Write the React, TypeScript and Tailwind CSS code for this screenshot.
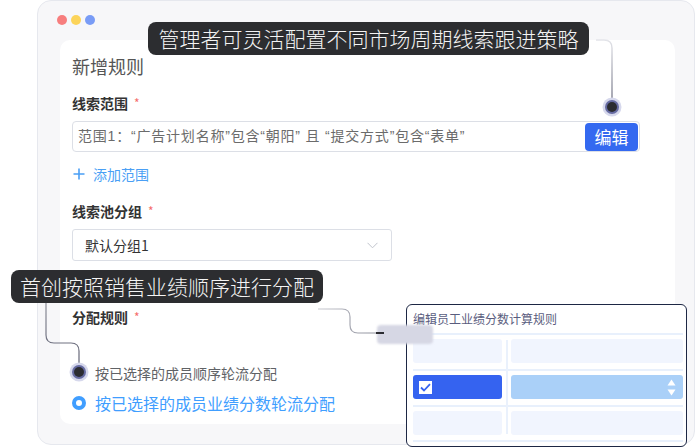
import React from "react";

const Star = () => <span className="ml-[6px] text-[#f56c6c] text-[12px] font-normal">*</span>;

export default function App() {
  return (
    <div className="relative w-[697px] h-[448px] bg-white overflow-hidden font-['Noto_Sans_CJK_SC','Noto_Sans',sans-serif]">
      {/* window */}
      <div className="ml-[37px] w-[658px] h-[445px] rounded-[14px] border border-[#e6e8ee] bg-[#f7f7f9] flex flex-col">
        <div className="flex items-center gap-[4px] pl-[19px] pt-[14px]">
          <div className="w-[10px] h-[10px] rounded-full bg-[#f77e7e]" />
          <div className="w-[10px] h-[10px] rounded-full bg-[#fcd45a]" />
          <div className="w-[10px] h-[10px] rounded-full bg-[#799cf6]" />
        </div>
        <div className="mt-[15px] ml-[22px] w-[615px] h-[384px] rounded-[10px] bg-white pl-[12px] pt-[13px] flex flex-col items-start">
          <div className="text-[18px] leading-[26px] text-[#555555]">新增规则</div>
          <div className="mt-[14px] text-[14px] leading-[20px] font-semibold text-[#333333] flex items-center">线索范围<Star /></div>
          <div className="mt-[8px] w-[568px] h-[31px] rounded-[4px] border border-[#dcdfe6] flex items-center justify-between pl-[5px] pr-[1px]">
            <span className="text-[14px] text-[#6b6b6b] whitespace-nowrap tracking-[0.8px] font-['Liberation_Sans','Noto_Sans_CJK_SC',sans-serif]">范围1：“广告计划名称”包含“朝阳” 且 “提交方式”包含“表单”</span>
            <div className="w-[53px] h-[28px] rounded-[4px] bg-[#3469f0] text-white text-[17px] flex items-center justify-center">编辑</div>
          </div>
          <div className="mt-[12px] h-[20px] flex items-center text-[14px] text-[#4a9ff5] pl-[1px]">
            <svg width="12" height="12" viewBox="0 0 12 12" className="mr-[8px]">
              <path d="M6 0.5V11.5M0.5 6H11.5" stroke="#4a9ff5" strokeWidth="1.6" />
            </svg>
            添加范围
          </div>
          <div className="mt-[17px] text-[14px] leading-[20px] font-semibold text-[#333333] flex items-center">线索池分组<Star /></div>
          <div className="mt-[8px] w-[320px] h-[32px] rounded-[3px] border border-[#dcdfe6] flex items-center justify-between pl-[12px] pr-[13px]">
            <span className="text-[14px] text-[#333333]">默认分组1</span>
            <svg width="11" height="7" viewBox="0 0 11 7">
              <path d="M0.5 0.8L5.5 5.8L10.5 0.8" fill="none" stroke="#c0c4cc" strokeWidth="1" />
            </svg>
          </div>
          <div className="mt-[46px] text-[14px] leading-[20px] font-semibold text-[#333333] flex items-center">分配规则<Star /></div>
          <div className="mt-[36px] h-[20px] flex items-center pl-[23px] text-[14px] text-[#606266]">按已选择的成员顺序轮流分配</div>
          <div className="mt-[8px] h-[24px] flex items-center text-[16px] text-[#409eff]">
            <div className="w-[14px] h-[14px] rounded-full border-[4px] border-[#409eff] bg-white mr-[9px]" />
            按已选择的成员业绩分数轮流分配
          </div>
        </div>
      </div>

      {/* connectors */}
      <svg className="absolute inset-0 pointer-events-none" width="697" height="448" viewBox="0 0 697 448">
        <defs>
          <linearGradient id="g1" x1="0" y1="0" x2="0" y2="1">
            <stop offset="0" stopColor="#e4e5ea" />
            <stop offset="1" stopColor="#6c6e80" />
          </linearGradient>
          <linearGradient id="g2" x1="0" y1="0" x2="0" y2="1">
            <stop offset="0" stopColor="#8d8f9a" />
            <stop offset="1" stopColor="#5c5e70" />
          </linearGradient>
          <linearGradient id="g3" x1="0" y1="0" x2="1" y2="0">
            <stop offset="0" stopColor="#c9cad1" />
            <stop offset="1" stopColor="#8a8c98" />
          </linearGradient>
        </defs>
        <path d="M596 40 H604 Q612 40 612 48 V104" fill="none" stroke="url(#g1)" strokeWidth="1.3" />
        <path d="M46 302 V335 Q46 343 54 343 H71 Q79 343 79 351 V370" fill="none" stroke="url(#g2)" strokeWidth="1.2" />
        <path d="M318 309 H342 Q350 309 350 317 V325 Q350 333 358 333 H378" fill="none" stroke="url(#g3)" strokeWidth="1.2" />
        <circle cx="612" cy="107" r="9.5" fill="#d6d8ec" />
        <circle cx="612" cy="107" r="7" fill="#666ba2" />
        <circle cx="612" cy="107" r="5" fill="#2b2c31" />
        <circle cx="79" cy="372" r="9.5" fill="#d6d8ec" />
        <circle cx="79" cy="372" r="7" fill="#666ba2" />
        <circle cx="79" cy="372" r="5" fill="#2b2c31" />
      </svg>

      {/* tooltips */}
      <div className="absolute left-[148px] top-[22px] w-[441px] h-[33px] rounded-[8px] bg-[#2c2d30] text-[#f4f4f4] text-[21px] leading-[33px] font-light text-center whitespace-nowrap">
        管理者可灵活配置不同市场周期线索跟进策略
      </div>
      <div className="absolute left-[11px] top-[270px] w-[312px] h-[33px] rounded-[8px] bg-[#2c2d30] text-[#f4f4f4] text-[21px] leading-[33px] font-light text-center whitespace-nowrap">
        首创按照销售业绩顺序进行分配
      </div>

      {/* floating panel */}
      <div className="absolute left-[406px] top-[304px] w-[281px] h-[143px] rounded-[6px] border border-[#1d2744] bg-white pl-[6px] pr-[3px] flex flex-col">
        <div className="h-[28px] flex items-center text-[12px] text-[#5a5d7e] whitespace-nowrap">编辑员工业绩分数计算规则</div>
        <div className="relative flex flex-col">
          <div className="absolute left-[93px] top-[7px] w-[2px] h-[94px] bg-[#eaf1fc]" />
          <div className="h-[2px] bg-[#e8f0fc]" />
          <div className="mt-[4px] flex gap-[9px]">
            <div className="w-[89px] h-[24px] rounded-[3px] bg-[#f1f5fe]" />
            <div className="w-[172px] h-[24px] rounded-[3px] bg-[#f1f5fe]" />
          </div>
          <div className="mt-[6px] h-[2px] bg-[#e8f0fc]" />
          <div className="mt-[4px] flex gap-[9px]">
            <div className="w-[89px] h-[24px] rounded-[3px] bg-[#3563f0] flex items-center pl-[6px]">
              <div className="w-[13px] h-[13px] bg-white flex items-center justify-center">
                <svg width="11" height="9" viewBox="0 0 11 9">
                  <path d="M1 4.5L4 7.5L10 1.2" fill="none" stroke="#3563f0" strokeWidth="1.8" />
                </svg>
              </div>
            </div>
            <div className="w-[172px] h-[24px] rounded-[3px] bg-[#aad0f8] flex items-center justify-end pr-[7px]">
              <svg width="9" height="17" viewBox="0 0 9 17">
                <path d="M4.5 0.5L8.5 6.5H0.5Z" fill="white" />
                <path d="M4.5 16.5L8.5 10.5H0.5Z" fill="white" />
              </svg>
            </div>
          </div>
          <div className="mt-[6px] h-[2px] bg-[#e8f0fc]" />
          <div className="mt-[4px] flex gap-[9px]">
            <div className="w-[89px] h-[24px] rounded-[3px] bg-[#f1f5fe]" />
            <div className="w-[172px] h-[24px] rounded-[3px] bg-[#f1f5fe]" />
          </div>
          <div className="mt-[5px] h-[2px] bg-[#e8f0fc]" />
        </div>
      </div>

      {/* drag ghost */}
      <div className="absolute left-[377px] top-[325px] w-[56px] h-[19px] rounded-[4px] bg-[#d6d7e4] blur-[1px]" />
      <div className="absolute left-[376px] top-[332px] w-[8px] h-[2px] bg-[#2b2c31]" />
    </div>
  );
}
